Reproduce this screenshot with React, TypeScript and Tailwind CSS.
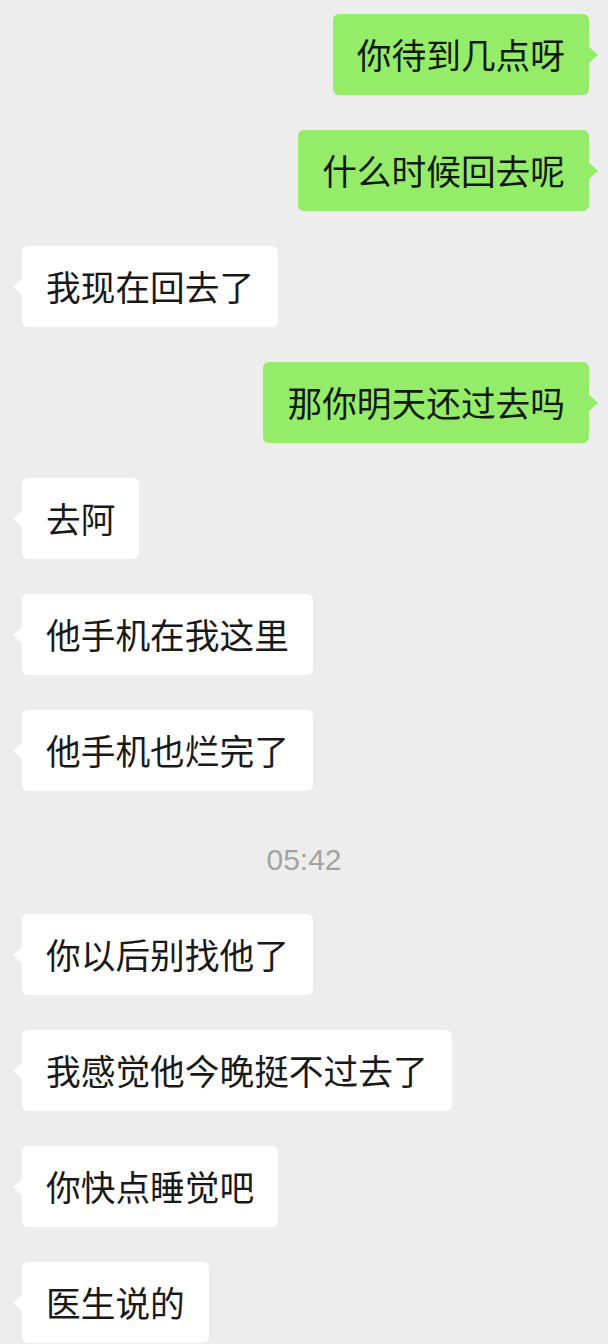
import React from "react";

type Msg = { side: "l" | "r"; text: string } | { side: "t"; text: string };

const msgs: Msg[] = [
  { side: "r", text: "你待到几点呀" },
  { side: "r", text: "什么时候回去呢" },
  { side: "l", text: "我现在回去了" },
  { side: "r", text: "那你明天还过去吗" },
  { side: "l", text: "去阿" },
  { side: "l", text: "他手机在我这里" },
  { side: "l", text: "他手机也烂完了" },
  { side: "t", text: "05:42" },
  { side: "l", text: "你以后别找他了" },
  { side: "l", text: "我感觉他今晚挺不过去了" },
  { side: "l", text: "你快点睡觉吧" },
  { side: "l", text: "医生说的" },
];

const cjk = { fontFamily: '"Noto Sans CJK SC", "Noto Sans", sans-serif' };

function Bubble({ side, text }: { side: "l" | "r"; text: string }) {
  const isR = side === "r";
  return (
    <div className={isR ? "flex justify-end pr-[19px]" : "flex justify-start pl-[22px]"}>
      <div
        className={
          "relative h-[81px] px-[24px] flex items-center rounded-[6px] text-[34.7px] leading-none " +
          (isR ? "bg-[#95ec69] text-[#111a0e]" : "bg-white text-[#191919]")
        }
        style={cjk}
      >
        <span className="whitespace-nowrap">{text}</span>
        {isR ? (
          <div className="absolute right-[-9px] top-1/2 -translate-y-1/2 w-0 h-0 border-y-[9px] border-y-transparent border-l-[10px] border-l-[#95ec69]" />
        ) : (
          <div className="absolute left-[-9px] top-1/2 -translate-y-1/2 w-0 h-0 border-y-[9px] border-y-transparent border-r-[10px] border-r-white" />
        )}
      </div>
    </div>
  );
}

export default function App() {
  return (
    <div className="w-[608px] h-[1344px] overflow-hidden bg-[#ededed] flex flex-col gap-[35px] pt-[14px]">
      {msgs.map((m, i) =>
        m.side === "t" ? (
          <div
            key={i}
            className="h-[53px] pt-[15px] flex items-center justify-center text-[30px] leading-[38px] text-[#a3a3a3]"
            style={{ fontFamily: '"Liberation Sans", Arial, sans-serif' }}
          >
            {m.text}
          </div>
        ) : (
          <Bubble key={i} side={m.side} text={m.text} />
        )
      )}
    </div>
  );
}
